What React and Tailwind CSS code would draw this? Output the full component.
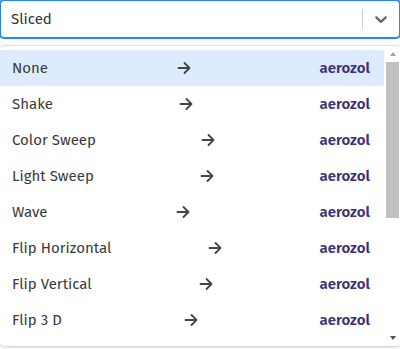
import React from "react";

const options = [
  "None",
  "Shake",
  "Color Sweep",
  "Light Sweep",
  "Wave",
  "Flip Horizontal",
  "Flip Vertical",
  "Flip 3 D",
  "Sliced",
  "Rotate",
  "Zoom",
  "Fade",
  "Bounce",
  "Slide",
];

function Arrow() {
  return (
    <svg width="14" height="14" viewBox="0 0 14 14" fill="none" stroke="#444444" strokeWidth="1.8" strokeLinecap="round" strokeLinejoin="round">
      <path d="M1.5 7h11M7.5 2l5 5-5 5" />
    </svg>
  );
}

export default function App() {
  return (
    <div className="w-[400px] h-[349px] bg-white" style={{ fontFamily: '"Fira Sans", "Open Sans", sans-serif' }}>
      <div className="relative">
        <div className="flex items-center h-[38px] rounded-[4px] border border-[#2684FF] shadow-[0_0_0_1px_#2684FF] bg-white">
          <div className="flex-1 px-[10px] text-[15px] text-[#333333]">Sliced</div>
          <div className="flex items-center self-stretch">
            <span className="w-px self-stretch my-2 bg-[#cccccc]"></span>
            <div className="p-2 text-[#666666]">
              <svg width="20" height="20" viewBox="0 0 20 20" fill="currentColor">
                <path d="M4.516 7.548c0.436-0.446 1.043-0.481 1.576 0l3.908 3.747 3.908-3.747c0.533-0.481 1.141-0.446 1.574 0 0.436 0.445 0.408 1.197 0 1.615-0.406 0.418-4.695 4.502-4.695 4.502-0.217 0.223-0.502 0.335-0.787 0.335s-0.57-0.112-0.789-0.335c0 0-4.287-4.084-4.695-4.502s-0.436-1.17 0-1.615z" />
              </svg>
            </div>
          </div>
        </div>
        <div className="absolute left-0 right-0 top-[46px] h-[300px] rounded-[4px] bg-white shadow-[0_0_0_1px_rgba(0,0,0,0.1),0_4px_11px_rgba(0,0,0,0.1)] overflow-hidden">
          <div className="h-[300px] overflow-hidden py-1 pr-[16px]">
            {options.map((o, i) => (
              <div
                key={o}
                className={`flex items-center justify-between h-[36px] pl-3 pr-[14px] text-[15px] ${i === 0 ? "bg-[#DEEBFF]" : ""}`}
              >
                <span className="text-[#3a3a3a]">{o}</span>
                <Arrow />
                <span className="font-semibold text-[#3b3176]">aerozol</span>
              </div>
            ))}
          </div>
          <div className="absolute right-0 top-0 bottom-0 w-[15px] flex flex-col items-center bg-white">
            <div className="h-[16px] flex items-center justify-center">
              <span className="w-0 h-0 border-l-[3.5px] border-r-[3.5px] border-b-[4px] border-l-transparent border-r-transparent border-b-[#a3a3a3]"></span>
            </div>
            <div className="w-[13px] h-[156px] bg-[#c1c1c1]"></div>
            <div className="flex-1"></div>
            <div className="h-[16px] flex items-center justify-center">
              <span className="w-0 h-0 border-l-[3.5px] border-r-[3.5px] border-t-[4px] border-l-transparent border-r-transparent border-t-[#505050]"></span>
            </div>
          </div>
        </div>
      </div>
    </div>
  );
}
